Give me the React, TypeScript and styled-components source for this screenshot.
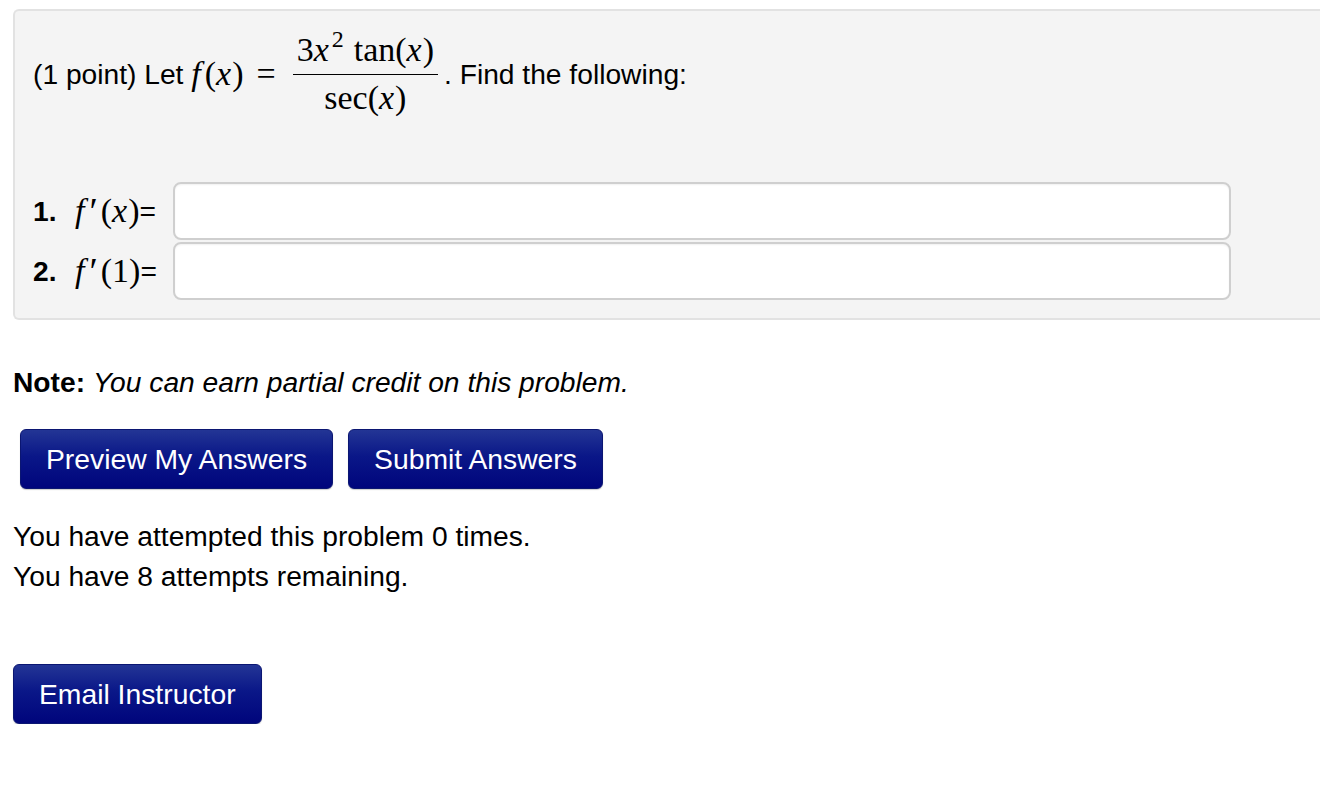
import React from "react";
import styled, { createGlobalStyle } from "styled-components";

const Global = createGlobalStyle`
  html, body { margin: 0; padding: 0; background: #ffffff; }
  body { font-family: "Liberation Sans", Arial, Helvetica, sans-serif; color: #000; }
`;

const Page = styled.div`
  padding: 9px 0 0 13px;
  font-size: 28.2px;
  line-height: 40px;
`;

const Panel = styled.div`
  background: #f4f4f4;
  border: 2px solid #e2e2e2;
  border-right: none;
  border-radius: 6px 0 0 6px;
  padding: 17px 0 18px 18px;
  height: 311px;
  box-sizing: border-box;
`;

const Statement = styled.div`
  display: flex;
  align-items: center;
  height: 92px;
  white-space: nowrap;
`;

const Math = styled.span`
  font-family: "Liberation Serif", "Times New Roman", serif;
  font-size: 34px;
  display: inline-flex;
  align-items: center;
`;

const Var = styled.i<{ $after?: number }>`
  font-style: italic;
  margin-right: ${(p) => p.$after ?? 1}px;
`;

const Prime = styled.span`
  font-size: 38px;
  margin: 0 3px 0 2px;
`;

const Op = styled.span<{ $pad?: number }>`
  padding: 0 ${(p) => p.$pad ?? 9}px;
`;

const Frac = styled.span`
  display: inline-flex;
  flex-direction: column;
  align-items: center;
  margin: 0 6px 0 4px;
`;

const Num = styled.span`
  line-height: 40px;
  padding: 0 4px 4px;
  border-bottom: 1.5px solid #000;
`;

const Den = styled.span`
  line-height: 40px;
  padding-top: 3px;
`;

const Sup = styled.sup`
  font-size: 24px;
  vertical-align: 14px;
  line-height: 0;
  margin: 0 10px 0 2px;
`;

const Answers = styled.div`
  margin-top: 62px;
  display: flex;
  flex-direction: column;
  gap: 2px;
`;

const Row = styled.div`
  display: flex;
  align-items: center;
`;

const Label = styled.span`
  display: inline-flex;
  align-items: center;
  white-space: nowrap;
  width: 140px;
`;

const Num1 = styled.b`
  font-weight: bold;
  width: 42px;
`;

const Input = styled.input`
  width: 1058px;
  height: 58px;
  box-sizing: border-box;
  border: 2px solid #cfcfcf;
  border-radius: 8px;
  background: #fff;
  box-shadow: inset 0 1px 2px rgba(0, 0, 0, 0.06);
  margin: 0;
  outline: none;
`;

const Note = styled.p`
  margin: 42px 0 0 0;
`;

const Em = styled.em`
  font-style: italic;
`;

const ButtonRow = styled.div`
  display: flex;
  gap: 15px;
  margin: 27px 0 0 7px;
`;

const Button = styled.button`
  font-family: "Liberation Sans", Arial, Helvetica, sans-serif;
  font-size: 28.3px;
  color: #fff;
  height: 60px;
  padding: 0 25px;
  border: 1px solid #0b1672;
  border-radius: 6px;
  background: linear-gradient(to bottom, #233595 0%, #0a1788 45%, #00057c 100%);
  box-shadow: 0 1px 1px rgba(0, 0, 0, 0.2);
  cursor: pointer;
`;

const Status = styled.div`
  margin-top: 27px;
`;

const EmailWrap = styled.div`
  margin-top: 68px;
`;

export default function App() {
  return (
    <>
      <Global />
      <Page>
        <Panel>
          <Statement>
            <span>(1 point) Let&nbsp;</span>
            <Math>
              <Var $after={4}>f</Var>(<Var>x</Var>)<Op $pad={13}>=</Op>
              <Frac>
                <Num>
                  3<Var>x</Var>
                  <Sup>2</Sup>tan(<Var>x</Var>)
                </Num>
                <Den>
                  sec(<Var>x</Var>)
                </Den>
              </Frac>
            </Math>
            <span>. Find the following:</span>
          </Statement>
          <Answers>
            <Row>
              <Label>
                <Num1>1.</Num1>
                <Math>
                  <Var $after={3}>f</Var>
                  <Prime>′</Prime>(<Var>x</Var>)
                </Math>
                =
              </Label>
              <Input aria-label="answer 1" />
            </Row>
            <Row>
              <Label>
                <Num1>2.</Num1>
                <Math>
                  <Var $after={3}>f</Var>
                  <Prime>′</Prime>(1)
                </Math>
                =
              </Label>
              <Input aria-label="answer 2" />
            </Row>
          </Answers>
        </Panel>
        <Note>
          <b>Note:</b> <Em>You can earn partial credit on this problem.</Em>
        </Note>
        <ButtonRow>
          <Button>Preview My Answers</Button>
          <Button>Submit Answers</Button>
        </ButtonRow>
        <Status>
          You have attempted this problem 0 times.
          <br />
          You have 8 attempts remaining.
        </Status>
        <EmailWrap>
          <Button>Email Instructor</Button>
        </EmailWrap>
      </Page>
    </>
  );
}
